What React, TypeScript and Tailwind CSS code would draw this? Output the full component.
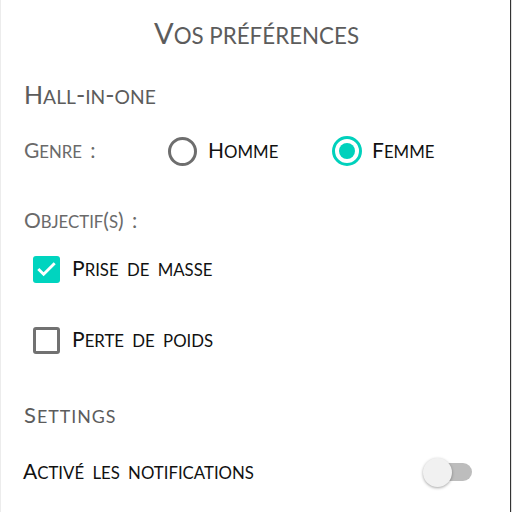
import React from "react";

function SC({ text, ratio = 0.8 }: { text: string; ratio?: number }) {
  const parts: { t: string; big: boolean }[] = [];
  for (const ch of text) {
    const big = ch !== ch.toLowerCase() || /[():\-]/.test(ch);
    const last = parts[parts.length - 1];
    if (last && last.big === big) last.t += ch;
    else parts.push({ t: ch, big });
  }
  return (
    <>
      {parts.map((p, i) =>
        p.big ? (
          <span key={i}>{p.t}</span>
        ) : (
          <span key={i} className="uppercase" style={{ fontSize: `${ratio}em` }}>
            {p.t}
          </span>
        )
      )}
    </>
  );
}

export default function App() {
  return (
    <div className="w-[512px] h-[512px] bg-white flex font-['Lato',sans-serif] [word-spacing:4px]">
      <div className="w-px bg-[#ececec]" />
      <div className="flex-1 flex flex-col pt-[18px]">
        <div className="h-[30px] leading-[30px] text-center text-[29px] text-[#5c5c5c] whitespace-nowrap pl-[2px] [word-spacing:0px]">
          <SC text="Vos préférences" ratio={0.77} />
        </div>
        <div className="mt-[31px] h-[30px] leading-[30px] pl-[23px] text-[25px] text-[#5c5c5c]">
          <SC text="Hall-in-one" ratio={0.77} />
        </div>
        <div className="mt-[27px] h-[30px] leading-[30px] flex items-center pl-[23px] text-[21px]">
          <span className="w-[144px] text-[#6a6a6a]">
            <SC text="Genre :" />
          </span>
          <div className="flex items-center gap-[11px] w-[164px]">
            <span className="w-[29px] h-[29px] rounded-full border-[3px] border-[#6e6e6e]" />
            <span className="text-[#111]">
              <SC text="Homme" />
            </span>
          </div>
          <div className="flex items-center gap-[10px]">
            <span className="w-[30px] h-[30px] rounded-full border-[3px] border-[#00d1bc] flex items-center justify-center">
              <span className="w-[16px] h-[16px] rounded-full bg-[#00d1bc]" />
            </span>
            <span className="text-[#111]">
              <SC text="Femme" />
            </span>
          </div>
        </div>
        <div className="mt-[39px] h-[30px] leading-[30px] pl-[23px] text-[21px] text-[#6a6a6a]">
          <SC text="Objectif(s) :" />
        </div>
        <div className="mt-[19px] h-[30px] leading-[30px] flex items-center pl-[32px] gap-[12px] text-[21px]">
          <span className="w-[27px] h-[27px] rounded-[3px] bg-[#00d4bf] flex items-center justify-center">
            <svg width="23" height="23" viewBox="0 0 24 24" fill="none" stroke="white" strokeWidth="3" strokeLinecap="square">
              <path d="M4.5 12.5l4.5 4.5L19.5 6.5" />
            </svg>
          </span>
          <span className="text-[#111]">
            <SC text="Prise de masse" />
          </span>
        </div>
        <div className="mt-[41px] h-[30px] leading-[30px] flex items-center pl-[32px] gap-[12px] text-[21px]">
          <span className="w-[27px] h-[27px] rounded-[3px] border-[3px] border-[#717171]" />
          <span className="text-[#111]">
            <SC text="Perte de poids" />
          </span>
        </div>
        <div className="mt-[45px] h-[30px] leading-[30px] pl-[23px] text-[22px] text-[#5c5c5c] tracking-[1px]">
          <SC text="Settings" ratio={0.81} />
        </div>
        <div className="mt-[27px] h-[30px] leading-[30px] flex items-center justify-between pl-[22px] pr-[38px] text-[21px]">
          <span className="text-[#111]">
            <SC text="Activé les notifications" />
          </span>
          <div className="relative w-[49px] h-[30px] flex items-center">
            <div className="absolute left-[6px] right-0 h-[18px] rounded-full bg-[#bdbdbd]" />
            <div className="absolute left-0 w-[29px] h-[29px] rounded-full bg-[#f1f1f1] shadow-[0_1px_3px_rgba(0,0,0,0.35)]" />
          </div>
        </div>
      </div>
      <div className="w-px bg-[#333]" />
      <div className="w-px bg-[#e0e0e0]" />
    </div>
  );
}
